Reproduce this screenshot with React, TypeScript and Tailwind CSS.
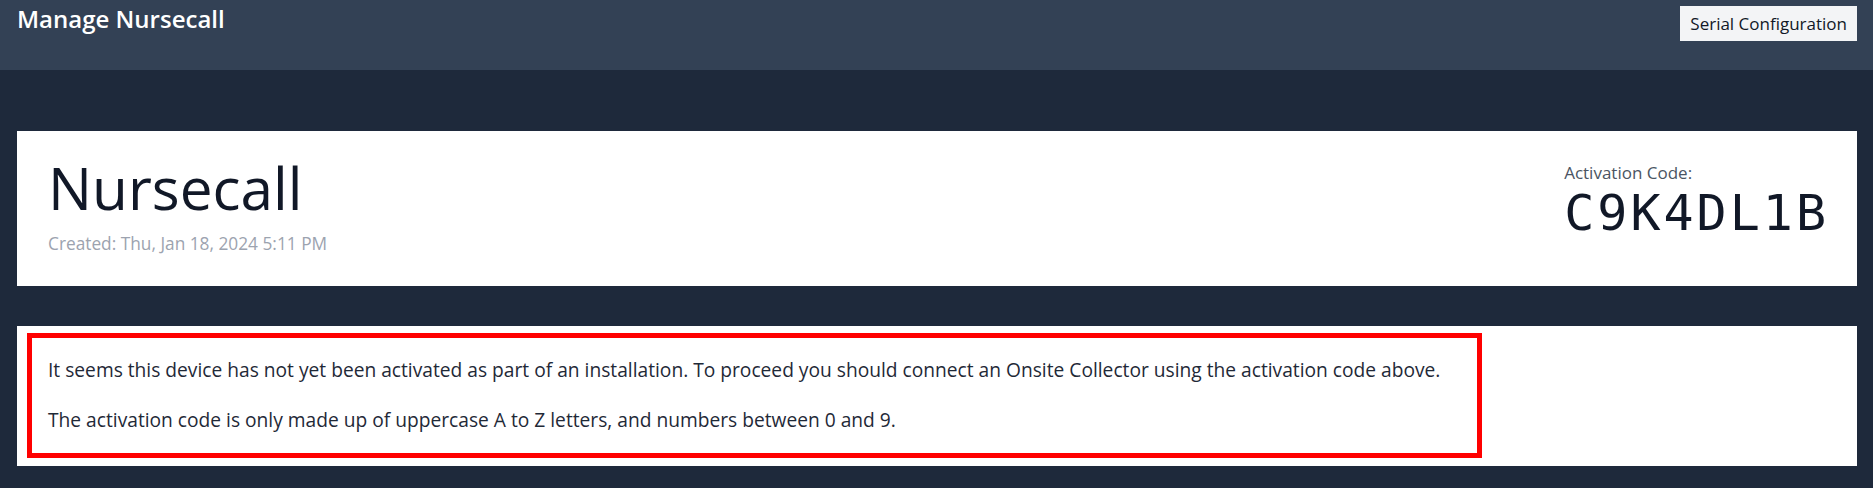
import React from 'react';

/* ── Manage Nursecall page ── */

const sans = { fontFamily: '"Open Sans", Lato, sans-serif' };

function Header() {
  return (
    <header className="h-[70px] bg-[#334155] flex items-start justify-between pl-[17px] pr-[16px]">
      <h1 className="mt-[4px] text-[24px] font-semibold text-white leading-[30px]">Manage Nursecall</h1>
      <button className="mt-[6px] h-[35px] px-[10px] bg-[#f3f4f6] text-[17px] leading-none text-[#111827]">
        Serial Configuration
      </button>
    </header>
  );
}

function DeviceCard() {
  return (
    <section className="bg-white h-[155px] flex justify-between pl-[31px] pr-[28px]">
      <div className="pt-[27px]">
        <h2 className="text-[58.5px] leading-none text-[#111827]">Nursecall</h2>
        <p className="mt-[14px] text-[17.3px] text-[#9ca3af]">Created: Thu, Jan 18, 2024 5:11 PM</p>
      </div>
      <div className="pt-[30px]">
        <p className="text-[17px] leading-6 text-[#4b5563]">Activation Code:</p>
        <p
          className="mt-[3px] text-[50px] leading-none tracking-[3px] text-[#111827]"
          style={{ fontFamily: '"DejaVu Sans Mono", monospace' }}
        >
          C9K4DL1B
        </p>
      </div>
    </section>
  );
}

function NoticeCard() {
  return (
    <section className="bg-white h-[140px] pl-[10px] pt-[7px]">
      {/* red highlight box */}
      <div className="w-[1455px] h-[125px] border-[5px] border-[#ff0000] pl-[16px] pt-[18px] whitespace-nowrap">
        <p className="text-[19.2px] leading-[28px] text-[#1f2937]">
          It seems this device has not yet been activated as part of an installation. To proceed you should connect an Onsite Collector using the activation code above.
        </p>
        <p className="mt-[22px] text-[19.2px] leading-[28px] text-[#1f2937]">
          The activation code is only made up of uppercase A to Z letters, and numbers between 0 and 9.
        </p>
      </div>
    </section>
  );
}

export default function App() {
  return (
    <div className="min-h-screen bg-[#1e293b]" style={sans}>
      <Header />
      <main className="pl-[17px] pr-[16px] pt-[61px] flex flex-col gap-[40px]">
        <DeviceCard />
        <NoticeCard />
      </main>
    </div>
  );
}
